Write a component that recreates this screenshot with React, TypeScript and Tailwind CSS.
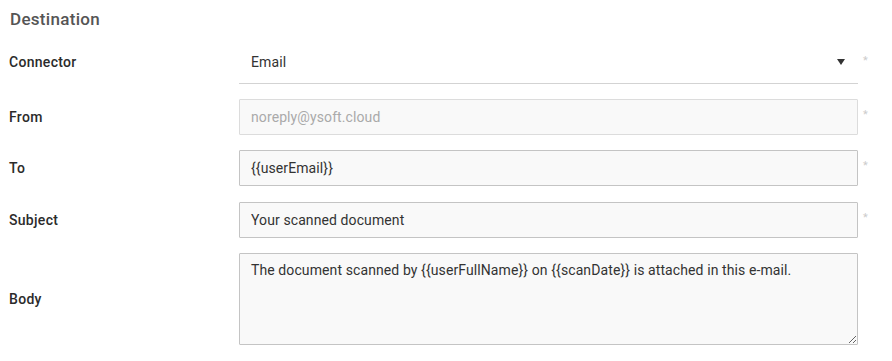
import { ReactNode } from 'react'

function Row({ label, children, required = true, top = false }: { label: string; children: ReactNode; required?: boolean; top?: boolean }) {
  return (
    <div className={`flex ${top ? 'items-start' : 'items-center'}`}>
      <div className={`w-[230px] shrink-0 text-[14px] leading-5 font-medium tracking-[0.3px] text-[#2b2b2b] ${top ? 'pt-[7px]' : ''}`}>{label}</div>
      <div className="w-[619px] shrink-0">{children}</div>
      <div className="self-start w-[30px] pl-[5px] pt-[10px] text-[11px] leading-3 text-[#ccc]">{required ? '*' : ''}</div>
    </div>
  )
}

const inputCls =
  'block w-full h-9 px-[11px] border rounded-[1px] bg-[#f9f9f9] text-[14px] tracking-[0.1px] text-[#333] outline-none'

export default function App() {
  return (
    <div className="w-[892px] h-[361px] bg-white pl-[9px] font-['Roboto',sans-serif] overflow-hidden">
      <h2 className="mt-[7px] pl-[1px] text-[17px] leading-6 font-medium tracking-[0.3px] text-[#555]">Destination</h2>

      <div className="mt-[14px] space-y-[15px]">
        <Row label="Connector" top>
          <div className="flex items-center justify-between pt-[7px] pb-[11px] pl-3 pr-[13px] border-b border-[#d3d3d3]">
            <span className="text-[14px] leading-5 tracking-[0.1px] text-[#333]">Email</span>
            <svg width="8" height="6" viewBox="0 0 8 6">
              <polygon points="0,0 8,0 4,6" fill="#333" />
            </svg>
          </div>
        </Row>

        <Row label="From">
          <input readOnly value="noreply@ysoft.cloud" className={`${inputCls} border-[#dcdcdc] !text-[#aaa]`} />
        </Row>

        <Row label="To">
          <input readOnly value="{{userEmail}}" className={`${inputCls} border-[#c4c4c4]`} />
        </Row>

        <div className="pt-[1px]">
          <Row label="Subject">
            <input readOnly value="Your scanned document" className={`${inputCls} border-[#c4c4c4]`} />
          </Row>
        </div>

        <Row label="Body" required={false}>
          <textarea
            readOnly
            defaultValue="The document scanned by {{userFullName}} on {{scanDate}} is attached in this e-mail."
            className="block w-full h-[92px] px-[11px] py-[6px] border border-[#c4c4c4] rounded-[1px] bg-[#f9f9f9] text-[14px] leading-5 tracking-[0.1px] text-[#333] outline-none"
          />
        </Row>
      </div>
    </div>
  )
}
